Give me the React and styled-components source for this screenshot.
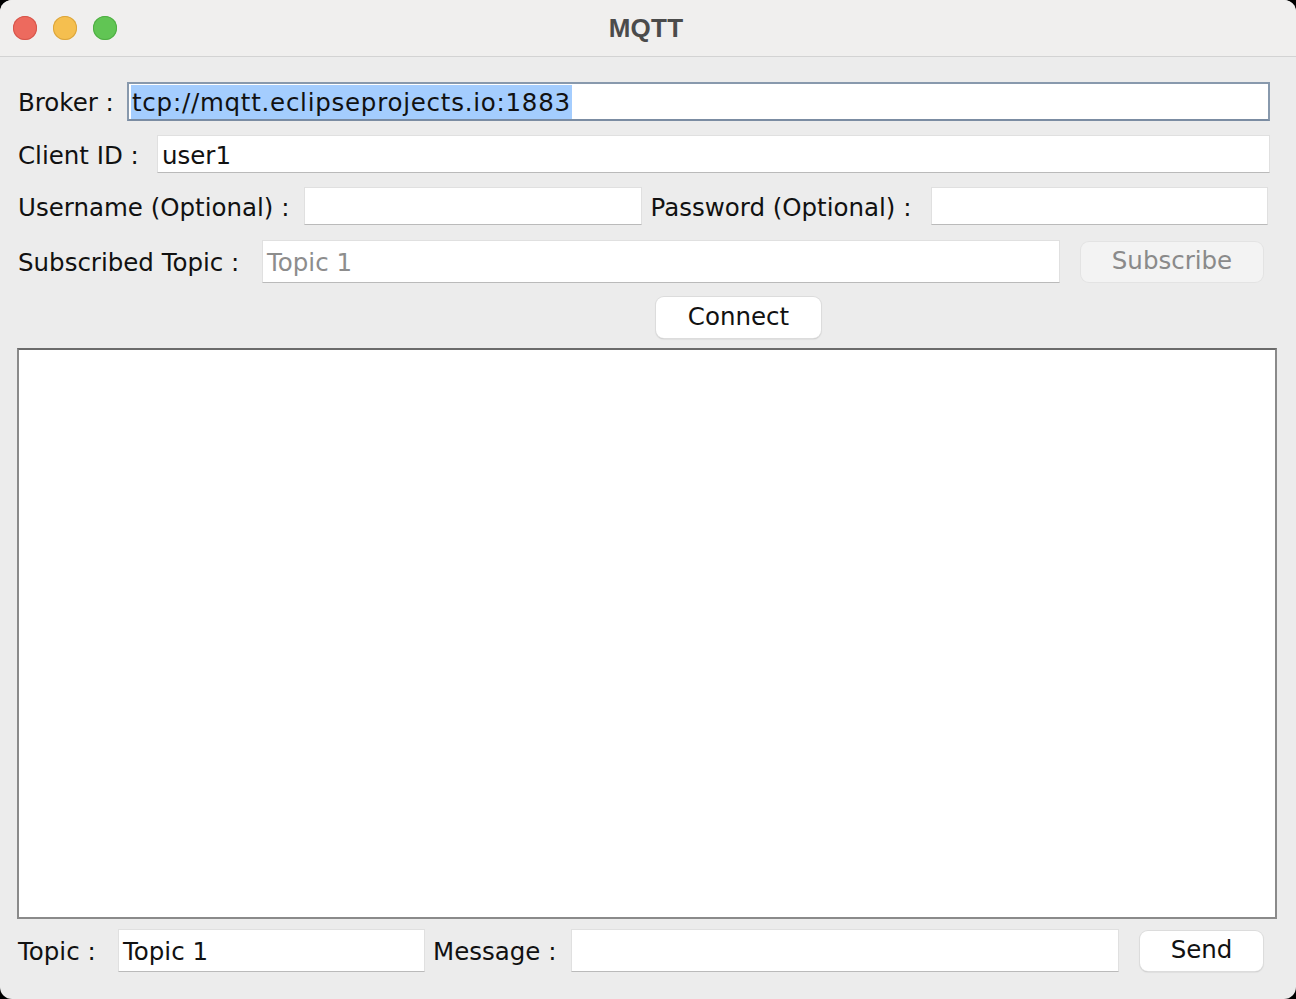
import styled, { createGlobalStyle } from "styled-components";

const Global = createGlobalStyle`
  html, body {
    margin: 0;
    padding: 0;
    background: #000;
  }
  body {
    font-family: "DejaVu Sans", "Liberation Sans", sans-serif;
  }
`;

const Window = styled.div`
  width: 1296px;
  height: 999px;
  border-radius: 12px;
  overflow: hidden;
  background: #ececec;
  display: flex;
  flex-direction: column;
`;

const TitleBar = styled.div`
  height: 56px;
  flex-shrink: 0;
  background: #f0efee;
  border-bottom: 1px solid #d3d3d3;
  display: flex;
  align-items: center;
  position: relative;
  padding-left: 13px;
  gap: 16px;
`;

const Light = styled.span`
  width: 24px;
  height: 24px;
  border-radius: 50%;
  background: ${(p) => p.color};
  box-shadow: inset 0 0 0 1px ${(p) => p.edge};
`;

const Title = styled.div`
  position: absolute;
  left: 0;
  right: 4px;
  text-align: center;
  font-family: "Liberation Sans", Arial, sans-serif;
  font-weight: 700;
  font-size: 26px;
  color: #4b4b4b;
  pointer-events: none;
  letter-spacing: 0.2px;
`;

const Content = styled.div`
  flex: 1;
  display: flex;
  flex-direction: column;
  padding: 25px 0 0 17px;
`;

const Row = styled.div`
  display: flex;
  align-items: center;
  margin-top: ${(p) => p.top || 0}px;
  padding-right: ${(p) => p.right || 26}px;
  height: ${(p) => p.h}px;
`;

const Label = styled.span`
  flex: none;
  box-sizing: border-box;
  width: ${(p) => p.w}px;
  padding-left: ${(p) => p.pl || 1}px;
  padding-top: 2px;
  font-size: 24.5px;
  color: #111;
  white-space: nowrap;
`;

const Field = styled.div`
  height: ${(p) => p.h}px;
  box-sizing: border-box;
  background: #fff;
  border: 1px solid #e0e0e0;
  border-bottom-color: #bababa;
  display: flex;
  align-items: center;
  padding: 2px 0 0 4px;
  font-size: 24.5px;
  color: ${(p) => (p.muted ? "#8d8d8d" : "#111")};
  flex: ${(p) => (p.w ? "none" : 1)};
  width: ${(p) => (p.w ? `${p.w}px` : "auto")};
  min-width: 0;
  white-space: nowrap;
  overflow: hidden;
`;

const FocusField = styled(Field)`
  border: 2px solid #8899ad;
  border-bottom-color: #7b8ca2;
  padding: 0 0 0 2px;
`;

const Selected = styled.span`
  background: #a4cdfe;
  line-height: 33px;
  padding: 1px 1px 0 1px;
  letter-spacing: 0.75px;
`;

const Button = styled.button`
  height: ${(p) => p.h || 40}px;
  width: ${(p) => p.w}px;
  flex: none;
  border-radius: 8px;
  border: none;
  background: ${(p) => (p.disabled ? "#f3f3f3" : "#fff")};
  box-shadow: ${(p) =>
    p.disabled
      ? "0 0 0 1px #e3e3e3"
      : "0 0 0 1px #dcdcdc, 0 1px 1.5px rgba(0,0,0,0.25)"};
  font-family: "DejaVu Sans", "Liberation Sans", sans-serif;
  font-size: 24.5px;
  color: ${(p) => (p.disabled ? "#8a8a8a" : "#111")};
  margin-left: ${(p) => p.ml || 0}px;
  padding: 0 0 2px;
`;

const Console = styled.div`
  margin-top: 10px;
  margin-right: 19px;
  height: 571px;
  box-sizing: border-box;
  background: #fff;
  border: 2px solid #8a8a8a;
  border-top-color: #6b6b6b;
`;

export default function App() {
  return (
    <>
      <Global />
      <Window>
        <TitleBar>
          <Light color="#ed6a5e" edge="#d6564b" />
          <Light color="#f5bf4f" edge="#dba53c" />
          <Light color="#61c554" edge="#4fae43" />
          <Title>MQTT</Title>
        </TitleBar>
        <Content>
          <Row h={39}>
            <Label w={110}>Broker :</Label>
            <FocusField h={39}>
              <Selected>tcp://mqtt.eclipseprojects.io:1883</Selected>
            </FocusField>
          </Row>
          <Row h={38} top={14}>
            <Label w={140}>Client ID :</Label>
            <Field h={38}>user1</Field>
          </Row>
          <Row h={38} top={14} right={28}>
            <Label w={287}>Username (Optional) :</Label>
            <Field h={38} />
            <Label w={289} pl={9}>Password (Optional) :</Label>
            <Field h={38} />
          </Row>
          <Row h={43} top={15} right={33}>
            <Label w={245}>Subscribed Topic :</Label>
            <Field h={43} muted>Topic 1</Field>
            <Button disabled w={182} ml={21}>
              Subscribe
            </Button>
          </Row>
          <Row h={41} top={14}>
            <Button w={165} h={41} ml={639}>
              Connect
            </Button>
          </Row>
          <Console />
          <Row h={43} top={10} right={33}>
            <Label w={101}>Topic :</Label>
            <Field h={43} w={307}>Topic 1</Field>
            <Label w={146} pl={8}>Message :</Label>
            <Field h={43} />
            <Button w={123} ml={21}>
              Send
            </Button>
          </Row>
        </Content>
      </Window>
    </>
  );
}
